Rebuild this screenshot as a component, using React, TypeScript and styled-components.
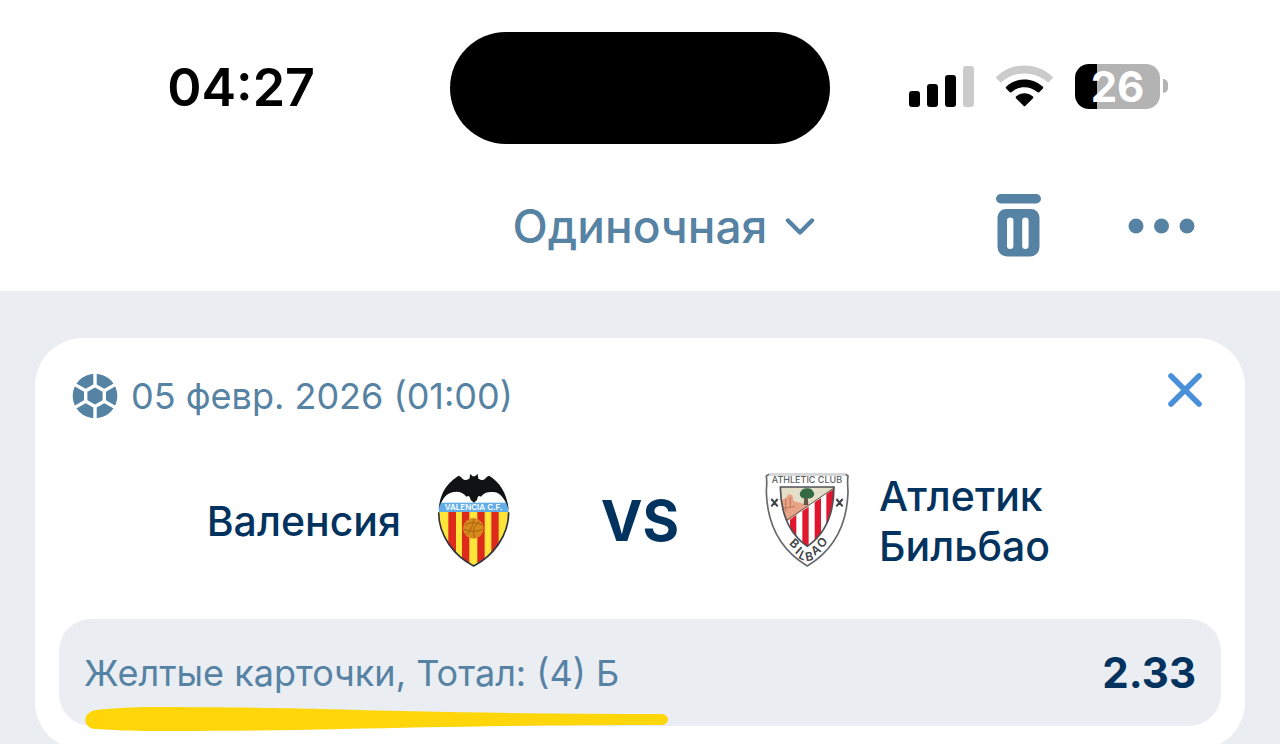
import React from "react";
import styled, { createGlobalStyle } from "styled-components";

const color = {
  steel: "#5682a3",
  navy: "#02335f",
  blue: "#4a90d9",
  surface: "#eaedf2",
  marker: "#ffd60a",
};

const GlobalStyle = createGlobalStyle`
  *, *::before, *::after { box-sizing: border-box; }
  body {
    margin: 0;
    background: ${color.surface};
    font-family: Inter, "Liberation Sans", sans-serif;
    color: ${color.navy};
  }
  svg { display: block; flex: none; }
`;

const Screen = styled.div`
  height: 100vh;
  overflow: hidden;
`;

const TopBar = styled.header`
  background: #fff;
`;

const StatusBar = styled.div`
  display: grid;
  grid-template-columns: 1fr auto 1fr;
  align-items: center;
  padding: 32px 0 16px;
  color: #000;
`;

const Clock = styled.time`
  justify-self: end;
  margin-right: 135px;
  font-size: 52px;
  line-height: 64px;
  font-weight: 600;
`;

const Island = styled.div`
  width: 380px;
  height: 112px;
  border-radius: 56px;
  background: #000;
`;

const StatusIcons = styled.div`
  display: flex;
  align-items: center;
  gap: 22px;
  padding: 0 0 4px 79px;
`;

const Battery = styled.div`
  display: flex;
  align-items: center;
  gap: 3px;
`;

const BatteryBody = styled.div<{ $level: number }>`
  width: 85px;
  border-radius: 14px;
  background: linear-gradient(to right, #000 ${(p) => p.$level}%, #b3b3b3 ${(p) => p.$level}%);
  color: #fff;
  text-align: center;
  font-size: 42px;
  line-height: 45px;
  font-weight: 700;
`;

const BatteryTip = styled.div`
  width: 5px;
  height: 14px;
  border-radius: 0 5px 5px 0;
  background: #b3b3b3;
`;

const NavBar = styled.nav`
  display: grid;
  grid-template-columns: 1fr auto 1fr;
  align-items: center;
  height: 131px;
  padding: 0 85px;
  color: ${color.steel};
`;

const PlainButton = styled.button`
  display: flex;
  align-items: center;
  padding: 0;
  border: 0;
  background: none;
  color: inherit;
  font: inherit;
  cursor: pointer;
`;

const BetTypeButton = styled(PlainButton)`
  grid-column: 2;
  gap: 18px;
  padding-left: 48px;
  font-size: 46px;
  line-height: 56px;
  font-weight: 500;
`;

const Actions = styled.div`
  display: flex;
  align-items: center;
  justify-content: flex-end;
  gap: 87px;
`;

const Main = styled.main`
  padding: 47px 35px 0;
`;

const Card = styled.article`
  padding: 35px 24px 24px;
  border-radius: 48px;
  background: #fff;
`;

const CardHead = styled.div`
  display: flex;
  align-items: flex-start;
  justify-content: space-between;
  padding: 0 19px 0 13px;
`;

const Kickoff = styled.div`
  display: flex;
  align-items: center;
  gap: 13px;
  height: 46px;
  color: ${color.steel};
  font-size: 36px;
  line-height: 44px;
`;

const CloseButton = styled(PlainButton)`
  color: ${color.blue};
`;

const Match = styled.div`
  display: grid;
  grid-template-columns: 1fr 238px 1fr;
  align-items: center;
  padding: 52px 0 48px;
`;

const Team = styled.div<{ $side: "home" | "away" }>`
  display: flex;
  flex-direction: ${(p) => (p.$side === "home" ? "row-reverse" : "row")};
  align-items: center;
  gap: 24px;
`;

const TeamName = styled.span`
  max-width: 240px;
  font-size: 41px;
  line-height: 50px;
  font-weight: 500;
`;

const Versus = styled.span`
  text-align: center;
  font-size: 56px;
  line-height: 64px;
  font-weight: 700;
`;

const Pick = styled.div`
  position: relative;
  display: flex;
  align-items: center;
  justify-content: space-between;
  height: 107px;
  padding: 0 25px;
  border-radius: 32px;
  background: ${color.surface};
`;

const PickName = styled.span`
  color: ${color.steel};
  font-size: 36px;
  line-height: 44px;
`;

const Odds = styled.strong`
  font-size: 42px;
  line-height: 50px;
  font-weight: 700;
`;

const Marker = styled.svg`
  position: absolute;
  top: 88px;
  left: 26px;
`;

const SignalIcon = () => (
  <svg width="65" height="41" viewBox="0 0 65 41" aria-label="Сигнал">
    <rect x="0" y="25" width="11" height="16" rx="3" />
    <rect x="18" y="18" width="11" height="23" rx="3" />
    <rect x="36" y="9" width="11" height="32" rx="3" />
    <rect x="54" y="0" width="11" height="41" rx="3" fill="#cbcbcb" />
  </svg>
);

const WifiIcon = () => (
  <svg width="57" height="42" viewBox="0 0 57 42" aria-label="Wi-Fi">
    <path d="M.7 11.4C16-3.2 41-3.2 56.3 11.4c.8.8.8 1.5.1 2.2l-3.2 3.2c-.7.7-1.4.7-2.1 0C38.500 5.700 18.500 5.700 5.900 16.800c-.7.7-1.400.7-2.100 0L.6 13.600c-.7-.7-.7-1.400.1-2.200z" fill="#cbcbcb" />
    <path d="M10.400 21.500c10.300-9.400 25.900-9.400 36.200 0 .8.800.8 1.500.1 2.200l-3.300 3.200c-.7.700-1.400.7-2.200.1-7.300-6.400-18.100-6.400-25.400 0-.8.600-1.500.6-2.200-.1l-3.300-3.200c-.7-.7-.7-1.400.1-2.200z" />
    <path d="M20.300 31.300c4.800-4 11.600-4 16.400 0 .8.700.8 1.400.1 2.100l-7.300 7.300c-.7.700-1.300.7-2 0l-7.300-7.300c-.7-.7-.7-1.400.1-2.100z" />
  </svg>
);

const ChevronIcon = () => (
  <svg width="30" height="18" viewBox="0 0 30 18" fill="none" stroke="currentColor" strokeWidth="4.400" strokeLinecap="round" strokeLinejoin="round">
    <path d="M3 3.500l12 12L27 3.500" />
  </svg>
);

const TrashIcon = () => (
  <svg width="45" height="64" viewBox="0 0 45 64" fill="currentColor">
    <rect width="45" height="9.500" rx="4.700" />
    <path fillRule="evenodd" d="M10 15h25a8.500 8.500 0 0 1 8.500 8.500V53a9.500 9.500 0 0 1-9.500 9.500H11A9.500 9.500 0 0 1 1.500 53V23.500A8.500 8.500 0 0 1 10 15zm4.200 8.500a3.200 3.200 0 0 0-3.200 3.200v25a3.200 3.200 0 0 0 6.400 0v-25a3.200 3.200 0 0 0-3.200-3.200zm15.200 0a3.200 3.200 0 0 0-3.200 3.200v25a3.200 3.200 0 0 0 6.400 0v-25a3.200 3.200 0 0 0-3.200-3.200z" />
  </svg>
);

const MoreIcon = () => (
  <svg width="67" height="16" viewBox="0 0 67 16" fill="currentColor">
    <circle cx="8" cy="8" r="7.500" />
    <circle cx="33.500" cy="8" r="7.500" />
    <circle cx="59" cy="8" r="7.500" />
  </svg>
);

const BallIcon = () => (
  <svg width="46" height="46" viewBox="0 0 46 46">
    <circle cx="23" cy="23" r="22.300" fill={color.steel} />
    <g stroke="#fff" strokeWidth="3.400" fill="none">
      <path d="M23 12.500l9.300 5.300v10.400L23 33.500l-9.300-5.300V17.800z" />
      <path d="M23 0v12.500M23 33.500V46M32.300 17.800l10.700-6.200M32.300 28.200l10.700 6.200M13.700 17.800L3 11.600M13.700 28.200L3 34.400" />
    </g>
  </svg>
);

const CloseIcon = () => (
  <svg width="34" height="34" viewBox="0 0 34 34" stroke="currentColor" strokeWidth="5.600" strokeLinecap="round">
    <path d="M3 3l28 28M31 3L3 31" />
  </svg>
);

const ValenciaCrest = () => (
  <svg width="96" height="96" viewBox="0 24 288 288" aria-label="Валенсия">
    <defs>
      <clipPath id="valencia-shield">
        <path d="M146 44C80 44 43 90 41 142c0 72 48 132 105 161 57-29 105-89 105-161C249 90 212 44 146 44z" />
      </clipPath>
    </defs>
    <g clipPath="url(#valencia-shield)">
      <rect x="36" y="40" width="220" height="76" fill="#fff" />
      <rect x="36" y="140" width="220" height="168" fill="#ffe43a" />
      <path d="M70 140h23v168H70zM111 140h22v168h-22zM157 140h22v168h-22zM199 140h22v168h-22z" fill="#de2a1c" />
      <rect x="36" y="113" width="220" height="28" fill="#62ade6" />
    </g>
    <text x="146" y="135" textAnchor="middle" fontSize="24" fontWeight="600" fill="#fff">VALENCIA C.F.</text>
    <circle cx="145" cy="190" r="31" fill="#d58a1c" />
    <path d="M119 180q26-14 52 0M117 193q28 12 56 0M124 210q20-20 22-48M150 219q-14-30 14-50" fill="none" stroke="#a8620f" strokeWidth="3" />
    <path d="M41 142c0 72 48 132 105 161 57-29 105-89 105-161" fill="none" stroke="#2d3340" strokeWidth="5" />
    <path d="M136 27l7 7h7l8-7 2 14c10 5 18 7 24-4l8-5c32 20 53 48 60 106-4-16-8-24-12-30-8-14-18-24-30-26-18-3-32 0-42 13-7-4-10-1-12 10l-9 8-10-8c-2-11-6-14-13-10-10-13-25-17-42-13-14 3-24 12-31 27-4 6-8 14-10 28 4-58 28-84 60-105l8 5c6 11 14 9 24 4z" fill="#111214" />
  </svg>
);

const clubLetters = [
  { char: "B", x: 119, y: 235, turn: 42 },
  { char: "I", x: 131, y: 256, turn: 42 },
  { char: "L", x: 143, y: 271, turn: 26 },
  { char: "B", x: 163, y: 274, turn: -12 },
  { char: "A", x: 182, y: 255, turn: -34 },
  { char: "O", x: 201, y: 232, turn: -45 },
];

const AthleticCrest = () => (
  <svg width="96" height="96" viewBox="12 24 288 288" aria-label="Атлетик Бильбао">
    <defs>
      <clipPath id="athletic-field">
        <path d="M76 66h161c0 78-25 140-80 178C102 206 77 144 76 66z" />
      </clipPath>
    </defs>
    <path d="M42 28h230l7 5c-3 20 0 34 0 48-3 104-46 176-122 222C80 257 37 185 34 81c0-14 3-28 0-48z" fill="#fff" stroke="#66696d" strokeWidth="5" strokeLinejoin="round" />
    <path d="M42 27h230" stroke="#d4d6d8" strokeWidth="6" />
    <g clipPath="url(#athletic-field)">
      <rect x="70" y="60" width="170" height="190" fill="#fff" />
      <path d="M70 60h170v10L92 170H70z" fill="#e3dfc9" />
      <path d="M70 106l22-6 8-12 12 2 4 18 22 6 24 8-60 44-32 10z" fill="#e9a487" />
      <path d="M92 101v38M106 96v30M76 132l44-8" stroke="#c67d63" strokeWidth="4" />
      <path d="M148 96h10l2 24h-14z" fill="#66544a" />
      <path d="M134 88c2-10 10-19 22-18 12-2 20 8 22 18-2 10-12 14-22 12-12 3-20-2-22-12z" fill="#356a45" />
      <path d="M105 164l19-14v90h-19zM142 138l19-13v130h-19zM179 112l19-13v130h-19zM214 87l26-18v130h-26z" fill="#e0172e" />
      <path d="M86 172l152-104" stroke="#5b5b5b" strokeWidth="3" />
    </g>
    <path d="M76 66h161c0 78-25 140-80 178C102 206 77 144 76 66z" fill="none" stroke="#4d5054" strokeWidth="5" />
    <text x="156" y="55" textAnchor="middle" fontSize="27" fontWeight="500" fill="#5a5d61">ATHLETIC CLUB</text>
    <path d="M49 102l19 22M68 102l-19 22M244 102l19 22M263 102l-19 22" stroke="#3f4347" strokeWidth="6" />
    <g fontSize="36" fontWeight="600" fill="#3f4347" textAnchor="middle">
      {clubLetters.map(({ char, x, y, turn }) => (
        <text key={x} transform={`translate(${x} ${y}) rotate(${turn})`} y="13">
          {char}
        </text>
      ))}
    </g>
  </svg>
);

export default function App() {
  return (
    <Screen>
      <GlobalStyle />
      <TopBar>
        <StatusBar>
          <Clock>04:27</Clock>
          <Island />
          <StatusIcons>
            <SignalIcon />
            <WifiIcon />
            <Battery>
              <BatteryBody $level={26}>26</BatteryBody>
              <BatteryTip />
            </Battery>
          </StatusIcons>
        </StatusBar>
        <NavBar>
          <BetTypeButton type="button">
            Одиночная
            <ChevronIcon />
          </BetTypeButton>
          <Actions>
            <PlainButton type="button" aria-label="Удалить">
              <TrashIcon />
            </PlainButton>
            <PlainButton type="button" aria-label="Ещё">
              <MoreIcon />
            </PlainButton>
          </Actions>
        </NavBar>
      </TopBar>
      <Main>
        <Card>
          <CardHead>
            <Kickoff>
              <BallIcon />
              <time>05 февр. 2026 (01:00)</time>
            </Kickoff>
            <CloseButton type="button" aria-label="Закрыть">
              <CloseIcon />
            </CloseButton>
          </CardHead>
          <Match>
            <Team $side="home">
              <ValenciaCrest />
              <TeamName>Валенсия</TeamName>
            </Team>
            <Versus>VS</Versus>
            <Team $side="away">
              <AthleticCrest />
              <TeamName>Атлетик Бильбао</TeamName>
            </Team>
          </Match>
          <Pick>
            <PickName>Желтые карточки, Тотал: (4) Б</PickName>
            <Odds>2.33</Odds>
            <Marker width="584" height="26" viewBox="0 0 584 26" aria-hidden="true">
              <path d="M11 3C30 1 50 0 66 0c60 0 130 1 170 2C340 5 460 7 577 7c8 1 8 10 0 11-120 0-220 2-320 4-80 2-150 2-190 2-20 0-40-1-57-2C-3 21-3 5 11 3z" fill={color.marker} />
            </Marker>
          </Pick>
        </Card>
      </Main>
    </Screen>
  );
}
